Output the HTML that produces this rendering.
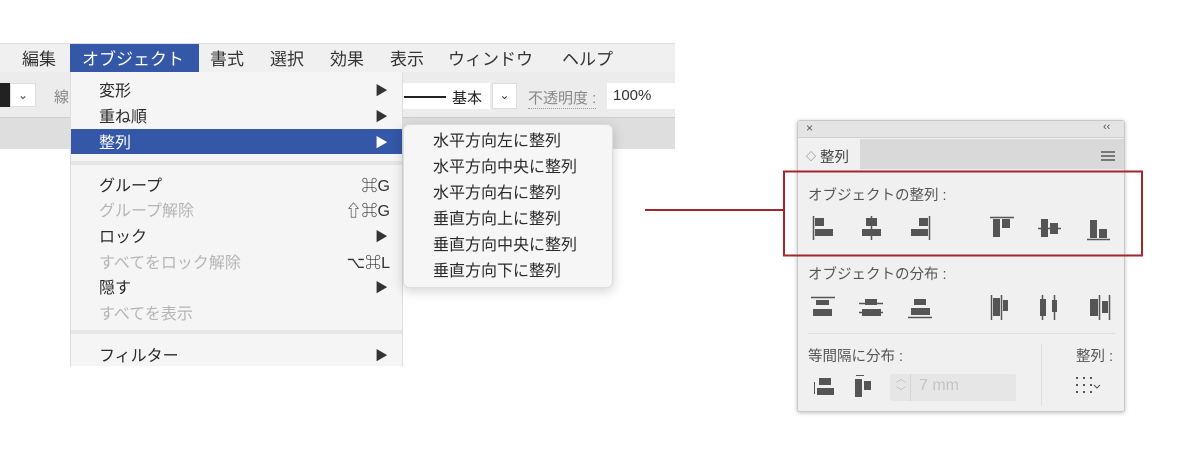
<!DOCTYPE html>
<html><head><meta charset="utf-8">
<style>
*{margin:0;padding:0;box-sizing:border-box}
body{width:1200px;height:472px;background:#fff;position:relative;overflow:hidden;font-family:"Liberation Sans","Noto Sans CJK JP",sans-serif;color:#222}
.a{position:absolute;white-space:nowrap}
.mb{left:0;top:43px;width:675px;height:29px;background:#f0f0f0;border-top:1px solid #ddd}
.mi{top:45px;font-size:17px;color:#333}
.tb{left:0;top:72px;width:675px;height:45px;background:#ececec}
.strip{left:0;top:117px;width:675px;height:32px;background:#dedede;border-top:1px solid #ccc}
.menu{left:70px;top:72px;width:333px;height:294px;background:#f5f5f5;border-left:1px solid #ddd;border-right:1px solid #ddd}
.it{left:28px;font-size:16px;color:#2a2a2a}
.dis{color:#b5b5b5}
.arr{left:304px;font-size:13px;color:#333}
.sc{right:12px;font-size:16px;color:#333}
.sep{left:0;width:331px;height:4px;background:#e6e6e6}
.sub{left:403px;top:124px;width:210px;height:164px;background:#f6f6f6;border-radius:6px;box-shadow:0 3px 12px rgba(0,0,0,.18);border:1px solid #ddd}
.si{left:29px;font-size:16px;color:#2a2a2a}
.panel{left:797px;top:120px;width:328px;height:292px;background:#f0f0f0;border:1px solid #c8c8c8;box-shadow:0 1px 4px rgba(0,0,0,.25);border-radius:3px}
.pl{font-size:14.5px;color:#555}
svg{position:absolute}
</style></head><body>
<div class="a mb"></div>
<div class="a" style="left:70px;top:44px;width:129px;height:28px;background:#3557a7"></div>
<div class="a mi" style="left:22px">編集</div>
<div class="a mi" style="left:82px;color:#fff">オブジェクト</div>
<div class="a mi" style="left:210px">書式</div>
<div class="a mi" style="left:270px">選択</div>
<div class="a mi" style="left:330px">効果</div>
<div class="a mi" style="left:390px">表示</div>
<div class="a mi" style="left:448px">ウィンドウ</div>
<div class="a mi" style="left:562px">ヘルプ</div>

<div class="a tb"></div>
<div class="a" style="left:0;top:83px;width:10px;height:24px;background:#222"></div>
<div class="a" style="left:10px;top:83px;width:26px;height:24px;background:#fff;border:1px solid #ddd;font-size:12px;text-align:center;line-height:22px;color:#444">⌄</div>
<div class="a" style="left:54px;top:86px;font-size:15px;color:#888">線</div>
<div class="a" style="left:402px;top:83px;width:88px;height:26px;background:#fff"></div>
<div class="a" style="left:404px;top:96px;width:42px;height:2px;background:#222"></div>
<div class="a" style="left:452px;top:87px;font-size:15px;color:#222">基本</div>
<div class="a" style="left:492px;top:83px;width:25px;height:26px;background:#fff;border:1px solid #ddd;font-size:12px;text-align:center;line-height:22px;color:#444">⌄</div>
<div class="a" style="left:528px;top:87px;font-size:15px;color:#888;border-bottom:1px dotted #999">不透明度 :</div>
<div class="a" style="left:607px;top:83px;width:70px;height:26px;background:#fff;font-size:15px;line-height:26px;padding-left:6px;color:#333">100%</div>
<div class="a strip"></div>

<div class="a menu">
<div class="a it" style="top:5px">変形</div><div class="a arr" style="top:8px">▶</div>
<div class="a it" style="top:31px">重ね順</div><div class="a arr" style="top:34px">▶</div>
<div class="a" style="left:0;top:57px;width:331px;height:25px;background:#3557a7"></div>
<div class="a it" style="top:57px;color:#fff">整列</div><div class="a arr" style="top:60px;color:#fff">▶</div>
<div class="a sep" style="top:89px"></div>
<div class="a it" style="top:100px">グループ</div><div class="a sc" style="top:100px">⌘G</div>
<div class="a it dis" style="top:125px">グループ解除</div><div class="a sc dis" style="top:125px">⇧⌘G</div>
<div class="a it" style="top:151px">ロック</div><div class="a arr" style="top:154px">▶</div>
<div class="a it dis" style="top:177px">すべてをロック解除</div><div class="a sc dis" style="top:177px">⌥⌘L</div>
<div class="a it" style="top:202px">隠す</div><div class="a arr" style="top:205px">▶</div>
<div class="a it dis" style="top:228px">すべてを表示</div>
<div class="a sep" style="top:258px"></div>
<div class="a it" style="top:270px">フィルター</div><div class="a arr" style="top:273px">▶</div>
</div>

<div class="a sub">
<div class="a si" style="top:2px">水平方向左に整列</div>
<div class="a si" style="top:28px">水平方向中央に整列</div>
<div class="a si" style="top:54px">水平方向右に整列</div>
<div class="a si" style="top:80px">垂直方向上に整列</div>
<div class="a si" style="top:106px">垂直方向中央に整列</div>
<div class="a si" style="top:132px">垂直方向下に整列</div>
</div>

<div class="a" style="left:645px;top:209px;width:139px;height:2px;background:#a3262c"></div>

<div class="a panel">
<div class="a" style="left:0;top:0;width:326px;height:17px;background:#e4e4e4;border-bottom:1px solid #d0d0d0"></div>
<div class="a" style="left:8px;top:0;font-size:12px;color:#555">×</div>
<div class="a" style="left:305px;top:0;font-size:11px;color:#555">‹‹</div>
<div class="a" style="left:0;top:18px;width:326px;height:30px;background:#d9d9d9"></div>
<div class="a" style="left:0;top:18px;width:62px;height:31px;background:#f0f0f0"></div>
<div class="a" style="left:8px;top:27px;font-size:10px;color:#666">◇</div>
<div class="a" style="left:22px;top:25px;font-size:14.5px;color:#444">整列</div>
<div class="a" style="left:303px;top:30px;width:14px;height:1.5px;background:#777;box-shadow:0 4px 0 #777,0 8px 0 #777"></div>
<div class="a pl" style="left:10px;top:63px">オブジェクトの整列 :</div>
<div class="a pl" style="left:10px;top:142px">オブジェクトの分布 :</div>
<div class="a" style="left:10px;top:212px;width:307px;height:1px;background:#ddd"></div>
<div class="a pl" style="left:10px;top:224px">等間隔に分布 :</div>
<div class="a pl" style="left:278px;top:224px">整列 :</div>
<div class="a" style="left:243px;top:223px;width:1px;height:62px;background:#ddd"></div>
<div class="a" style="left:92px;top:253px;width:126px;height:27px;background:#e6e6e6;border-radius:2px"></div>
<div class="a" style="left:112px;top:253px;width:1px;height:27px;background:#d4d4d4"></div>
<div class="a" style="left:98px;top:252px;font-size:10px;color:#bbb;line-height:13px">︿<br>﹀</div>
<div class="a" style="left:121px;top:256px;font-size:16px;color:#c4c4c4">7 mm</div>
</div>

<svg width="1200" height="472" viewBox="0 0 1200 472" style="left:0;top:0">
<g fill="#555" stroke="#555">
<line x1="813.5" y1="216" x2="813.5" y2="240" stroke-width="1.5"/>
<rect x="815" y="218" width="9" height="8" stroke="none"/><rect x="815" y="229" width="18" height="7" stroke="none"/>
<line x1="871.5" y1="216" x2="871.5" y2="240" stroke-width="1.5"/>
<rect x="866" y="218" width="11" height="8" stroke="none"/><rect x="862" y="229" width="19" height="7" stroke="none"/>
<line x1="929.5" y1="216" x2="929.5" y2="240" stroke-width="1.5"/>
<rect x="919" y="218" width="9" height="8" stroke="none"/><rect x="911" y="229" width="17" height="7" stroke="none"/>
<line x1="990" y1="217.5" x2="1014" y2="217.5" stroke-width="1.5"/>
<rect x="993" y="219" width="7" height="18" stroke="none"/><rect x="1002" y="219" width="8" height="9" stroke="none"/>
<line x1="1038" y1="228.5" x2="1061" y2="228.5" stroke-width="1.5"/>
<rect x="1041" y="219" width="7" height="18" stroke="none"/><rect x="1050" y="223" width="8" height="11" stroke="none"/>
<line x1="1087" y1="239.5" x2="1110" y2="239.5" stroke-width="1.5"/>
<rect x="1090" y="220" width="7" height="18" stroke="none"/><rect x="1099" y="229" width="8" height="9" stroke="none"/>
<line x1="811" y1="297.5" x2="835" y2="297.5" stroke-width="1.5"/>
<rect x="816" y="300" width="13" height="5" stroke="none"/><rect x="813" y="309" width="19" height="7" stroke="none"/>
<line x1="859" y1="303.5" x2="883" y2="303.5" stroke-width="1.5"/><line x1="859" y1="312.5" x2="883" y2="312.5" stroke-width="1.5"/>
<rect x="865" y="299" width="12" height="6" stroke="none"/><rect x="862" y="309" width="19" height="7" stroke="none"/>
<line x1="908" y1="317.5" x2="932" y2="317.5" stroke-width="1.5"/>
<rect x="914" y="299" width="12" height="6" stroke="none"/><rect x="911" y="308" width="19" height="7" stroke="none"/>
<line x1="991.5" y1="295" x2="991.5" y2="320" stroke-width="1.5"/><line x1="1001.5" y1="295" x2="1001.5" y2="320" stroke-width="1.5"/>
<rect x="993" y="298" width="7" height="18" stroke="none"/><rect x="1003" y="300" width="5" height="11" stroke="none"/>
<line x1="1042.5" y1="295" x2="1042.5" y2="320" stroke-width="1.5"/><line x1="1054.5" y1="295" x2="1054.5" y2="320" stroke-width="1.5"/>
<rect x="1040" y="299" width="6" height="17" stroke="none"/><rect x="1052" y="300" width="5" height="12" stroke="none"/>
<line x1="1099.5" y1="295" x2="1099.5" y2="320" stroke-width="1.5"/><line x1="1109.5" y1="295" x2="1109.5" y2="320" stroke-width="1.5"/>
<rect x="1090" y="299" width="8" height="17" stroke="none"/><rect x="1102" y="301" width="6" height="12" stroke="none"/>
<line x1="814.5" y1="382" x2="814.5" y2="394" stroke-width="1"/>
<rect x="819" y="378" width="12" height="7" stroke="none"/><rect x="817" y="388" width="17" height="7" stroke="none"/>
<line x1="856" y1="375.5" x2="864" y2="375.5" stroke-width="1"/>
<rect x="855" y="379" width="7" height="18" stroke="none"/><rect x="864" y="381" width="7" height="9" stroke="none"/>
</g>
<g fill="#555">
<rect x="1076" y="377" width="2" height="2"/><rect x="1083" y="377" width="2" height="2"/><rect x="1090" y="377" width="2" height="2"/>
<rect x="1076" y="384" width="2" height="2"/><rect x="1083" y="384" width="2" height="2"/><rect x="1090" y="384" width="2" height="2"/>
<rect x="1076" y="391" width="2" height="2"/><rect x="1083" y="391" width="2" height="2"/><rect x="1090" y="391" width="2" height="2"/>
</g>
<path d="M1094 385 l3 3 l3 -3" fill="none" stroke="#555" stroke-width="1"/>
<rect x="784" y="171.5" width="358" height="84" fill="none" stroke="#a3262c" stroke-width="2"/>
</svg>
</body></html>
